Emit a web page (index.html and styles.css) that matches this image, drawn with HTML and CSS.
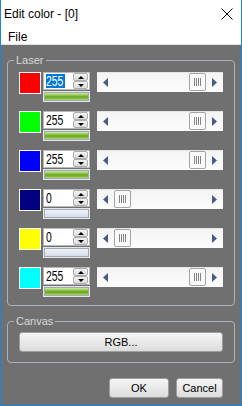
FILE: index.html
```html
<!DOCTYPE html>
<html>
<head>
<meta charset="utf-8">
<link rel="stylesheet" href="styles.css">
</head>
<body>
<div class="win">
  <div class="titlebar">
    <span class="title">Edit color - [0]</span>
    <svg class="close" width="12" height="12" viewBox="0 0 12 12"><path d="M0.5 0.5 L11.5 11.5 M11.5 0.5 L0.5 11.5" stroke="#000" stroke-width="1" fill="none"/></svg>
  </div>
  <div class="menubar"><span>File</span></div>
  <div class="client">
    <fieldset class="group">
      <legend>Laser</legend>
      <div class="rows">
        <div class="row">
          <div class="swatch red"></div>
          <div class="numcol">
            <div class="num"><span class="val sel"><span class="digits">255</span></span><span class="spin"><span class="sb up"></span><span class="sb down"></span></span></div>
            <div class="prog"><div class="fill full"></div></div>
          </div>
          <div class="scroll max"><span class="arr"><svg width="5" height="9" viewBox="0 0 5 9"><path d="M5 0 L0 4.5 L5 9 Z" fill="#4a5a86"/></svg></span><span class="track"><span class="thumb"><i></i><i></i><i></i><i></i></span></span><span class="arr"><svg width="5" height="9" viewBox="0 0 5 9"><path d="M0 0 L5 4.5 L0 9 Z" fill="#4a5a86"/></svg></span></div>
        </div>
        <div class="row">
          <div class="swatch green"></div>
          <div class="numcol">
            <div class="num"><span class="val"><span class="digits">255</span></span><span class="spin"><span class="sb up"></span><span class="sb down"></span></span></div>
            <div class="prog"><div class="fill full"></div></div>
          </div>
          <div class="scroll max"><span class="arr"><svg width="5" height="9" viewBox="0 0 5 9"><path d="M5 0 L0 4.5 L5 9 Z" fill="#4a5a86"/></svg></span><span class="track"><span class="thumb"><i></i><i></i><i></i><i></i></span></span><span class="arr"><svg width="5" height="9" viewBox="0 0 5 9"><path d="M0 0 L5 4.5 L0 9 Z" fill="#4a5a86"/></svg></span></div>
        </div>
        <div class="row">
          <div class="swatch blue"></div>
          <div class="numcol">
            <div class="num"><span class="val"><span class="digits">255</span></span><span class="spin"><span class="sb up"></span><span class="sb down"></span></span></div>
            <div class="prog"><div class="fill full"></div></div>
          </div>
          <div class="scroll max"><span class="arr"><svg width="5" height="9" viewBox="0 0 5 9"><path d="M5 0 L0 4.5 L5 9 Z" fill="#4a5a86"/></svg></span><span class="track"><span class="thumb"><i></i><i></i><i></i><i></i></span></span><span class="arr"><svg width="5" height="9" viewBox="0 0 5 9"><path d="M0 0 L5 4.5 L0 9 Z" fill="#4a5a86"/></svg></span></div>
        </div>
        <div class="row">
          <div class="swatch navy"></div>
          <div class="numcol">
            <div class="num"><span class="val"><span class="digits">0</span></span><span class="spin"><span class="sb up"></span><span class="sb down"></span></span></div>
            <div class="prog"><div class="fill empty"></div></div>
          </div>
          <div class="scroll min"><span class="arr"><svg width="5" height="9" viewBox="0 0 5 9"><path d="M5 0 L0 4.5 L5 9 Z" fill="#4a5a86"/></svg></span><span class="track"><span class="thumb"><i></i><i></i><i></i><i></i></span></span><span class="arr"><svg width="5" height="9" viewBox="0 0 5 9"><path d="M0 0 L5 4.5 L0 9 Z" fill="#4a5a86"/></svg></span></div>
        </div>
        <div class="row">
          <div class="swatch yellow"></div>
          <div class="numcol">
            <div class="num"><span class="val"><span class="digits">0</span></span><span class="spin"><span class="sb up"></span><span class="sb down"></span></span></div>
            <div class="prog"><div class="fill empty"></div></div>
          </div>
          <div class="scroll min"><span class="arr"><svg width="5" height="9" viewBox="0 0 5 9"><path d="M5 0 L0 4.5 L5 9 Z" fill="#4a5a86"/></svg></span><span class="track"><span class="thumb"><i></i><i></i><i></i><i></i></span></span><span class="arr"><svg width="5" height="9" viewBox="0 0 5 9"><path d="M0 0 L5 4.5 L0 9 Z" fill="#4a5a86"/></svg></span></div>
        </div>
        <div class="row">
          <div class="swatch cyan"></div>
          <div class="numcol">
            <div class="num"><span class="val"><span class="digits">255</span></span><span class="spin"><span class="sb up"></span><span class="sb down"></span></span></div>
            <div class="prog"><div class="fill full"></div></div>
          </div>
          <div class="scroll max"><span class="arr"><svg width="5" height="9" viewBox="0 0 5 9"><path d="M5 0 L0 4.5 L5 9 Z" fill="#4a5a86"/></svg></span><span class="track"><span class="thumb"><i></i><i></i><i></i><i></i></span></span><span class="arr"><svg width="5" height="9" viewBox="0 0 5 9"><path d="M0 0 L5 4.5 L0 9 Z" fill="#4a5a86"/></svg></span></div>
        </div>
      </div>
    </fieldset>
    <fieldset class="group canvas">
      <legend>Canvas</legend>
      <div class="canvas-body">
        <button class="btn wide">RGB...</button>
      </div>
    </fieldset>
    <div class="actions">
      <button class="btn ok">OK</button>
      <button class="btn cancel">Cancel</button>
    </div>
  </div>
</div>
</body>
</html>
```
FILE: styles.css
```css
html, body {
  margin: 0;
  padding: 0;
  width: 242px;
  height: 406px;
  overflow: hidden;
  background: #fff;
}
.win {
  box-sizing: border-box;
  width: 242px;
  height: 406px;
  border: 1px solid #1a84d8;
  border-top: none;
  display: flex;
  flex-direction: column;
  background: #707070;
  font-family: "Liberation Sans", Arial, sans-serif;
}
.titlebar {
  box-sizing: border-box;
  height: 30px;
  background: #fff;
  display: flex;
  justify-content: space-between;
  align-items: flex-start;
  padding: 7px 8px 0 3px;
}
.title {
  font-size: 12px;
  line-height: 14px;
  color: #000;
}
.close {
  margin-top: 1px;
  display: block;
}
.menubar {
  height: 14px;
  line-height: 14px;
  font-size: 12px;
  background: #fff;
  padding-left: 7px;
  border-bottom: 1px solid #e2e2e2;
  color: #000;
}
.client {
  flex: 1;
  padding: 0 6px;
  display: flex;
  flex-direction: column;
}
.group {
  margin: 9px 0 0;
  padding: 0;
  border: 1px solid #aab2bc;
  border-radius: 4px;
  min-width: 0;
}
.group legend {
  margin-left: 6px;
  padding: 0 2px;
  font-size: 11px;
  line-height: 13px;
  color: #d8d8d8;
}
.rows {
  padding: 5px 10px 9px 11px;
  display: flex;
  flex-direction: column;
  gap: 10px;
}
.row {
  display: flex;
  align-items: flex-start;
  height: 29px;
}
.swatch {
  box-sizing: border-box;
  width: 22px;
  height: 22px;
  border: 1px solid #fff;
  margin-right: 2px;
}
.red { background: #ff0000; }
.green { background: #00ff00; }
.blue { background: #0000ff; }
.navy { background: #000080; }
.yellow { background: #ffff00; }
.cyan { background: #00ffff; }
.numcol {
  width: 47px;
  display: flex;
  flex-direction: column;
}
.num {
  box-sizing: border-box;
  height: 18px;
  border: 1px solid #b8b8b8;
  background: #fff;
  display: flex;
  align-items: center;
  justify-content: space-between;
  padding: 0 1px 0 2px;
}
.val {
  display: block;
  width: 19px;
  height: 14px;
  line-height: 14px;
  font-size: 14px;
  color: #000;
  overflow: visible;
  white-space: nowrap;
}
.val.sel {
  background: #0078d7;
  color: #fff;
}
.digits {
  display: inline-block;
  transform: scaleX(0.74);
  transform-origin: 0 50%;
}
.spin {
  display: flex;
  flex-direction: column;
  width: 15px;
  height: 16px;
}
.sb {
  box-sizing: border-box;
  flex: 1;
  border: 1px solid #adadad;
  border-radius: 2px;
  background: linear-gradient(#f4f4f4, #dcdcdc);
  display: flex;
  align-items: center;
  justify-content: center;
}
.sb::after {
  content: "";
  width: 0;
  height: 0;
  border-left: 3px solid transparent;
  border-right: 3px solid transparent;
}
.sb.up::after { border-bottom: 3px solid #000; }
.sb.down::after { border-top: 3px solid #000; }
.prog {
  box-sizing: border-box;
  height: 9px;
  margin: 2px 1px 0;
  border: 1px solid #a3a8b1;
  box-shadow: 0 0 0 1px #e3e6eb;
  background: #fff;
}
.fill {
  height: 100%;
}
.fill.full {
  background: linear-gradient(#cfe9ad 0%, #98cb57 30%, #6aa620 55%, #82bc3c 80%, #b4d987 100%);
}
.fill.empty {
  background: linear-gradient(#eef2f8, #d6dde9);
}
.scroll {
  width: 126px;
  height: 20px;
  margin-left: 7px;
  display: flex;
  background: linear-gradient(#e6e6e6 0, #e6e6e6 1px, #f4f4f4 1px, #fcfcfc 100%);
}
.arr {
  width: 17px;
  display: flex;
  align-items: center;
  justify-content: center;
}
.arr svg { display: block; }
.track {
  flex: 1;
  display: flex;
}
.thumb {
  box-sizing: border-box;
  width: 17px;
  height: 18px;
  margin-top: 1px;
  border: 1px solid #a4a4a4;
  border-radius: 2px;
  background: #fafafa;
  display: flex;
  align-items: center;
  justify-content: center;
  gap: 1px;
}
.thumb i {
  display: block;
  width: 1px;
  height: 8px;
  background: #858585;
}
.scroll.max .thumb { margin-left: auto; }
.canvas-body {
  padding: 4px 11px 10px;
  display: flex;
}
.btn {
  box-sizing: border-box;
  height: 20px;
  padding: 0;
  border: 1px solid #9e9e9e;
  border-radius: 3px;
  background: linear-gradient(#f6f6f6, #dcdcdc);
  font-family: "Liberation Sans", Arial, sans-serif;
  font-size: 11px;
  color: #000;
}
.btn.wide { flex: 1; }
.actions {
  display: flex;
  justify-content: flex-end;
  gap: 7px;
  margin-top: 15px;
  padding-right: 12px;
}
.btn.ok { width: 60px; }
.btn.cancel { width: 47px; }
```
